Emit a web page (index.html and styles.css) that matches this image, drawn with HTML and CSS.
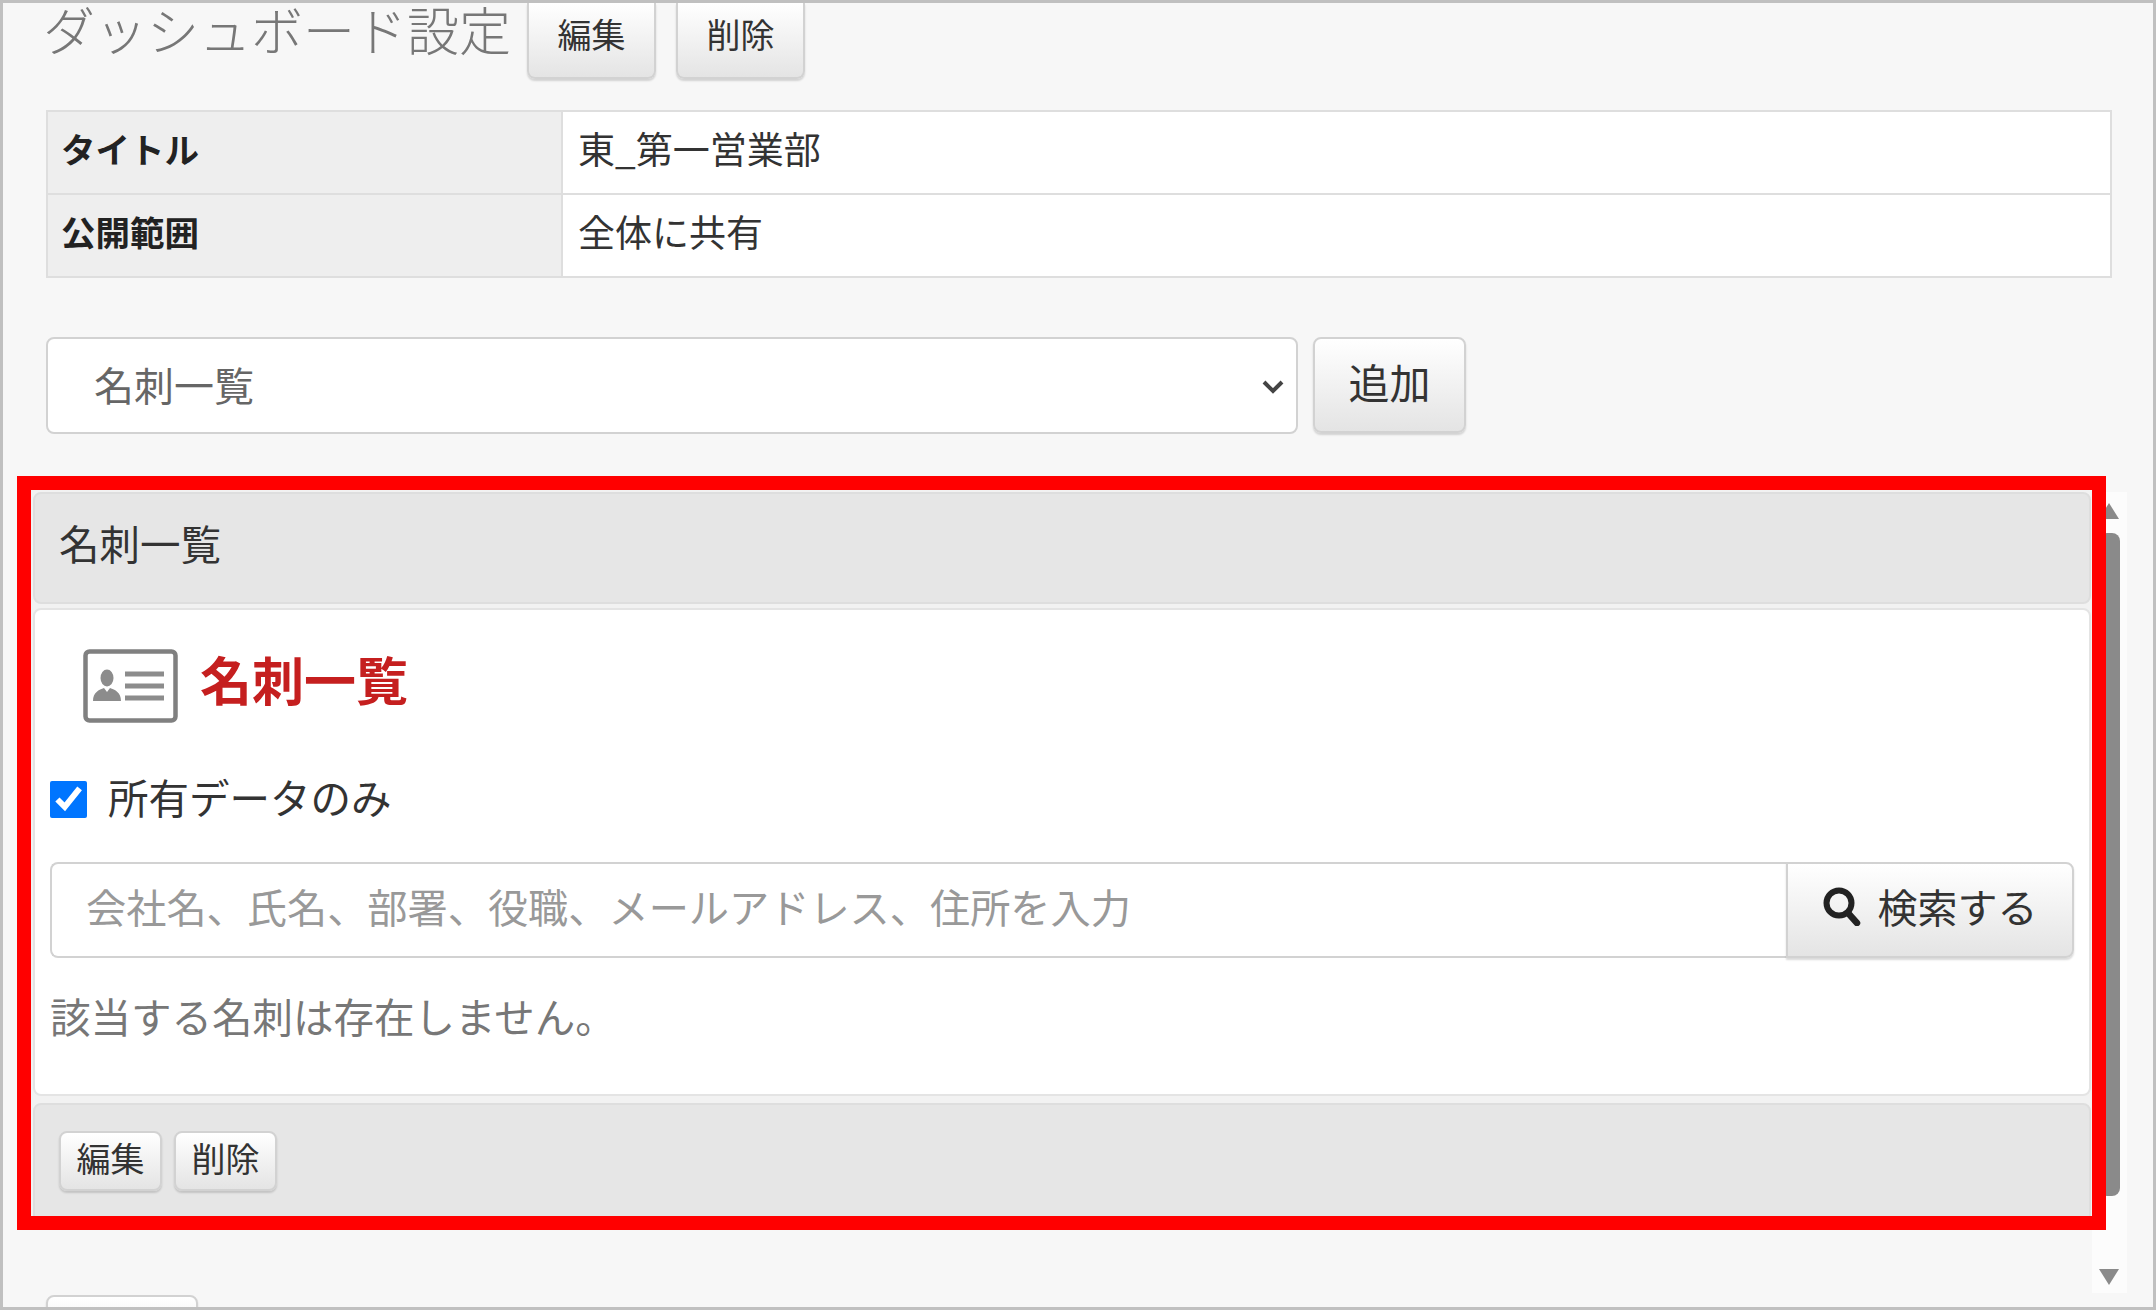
FILE: index.html
```html
<!DOCTYPE html>
<html lang="ja">
<head>
    <meta charset="UTF-8">
    <title>ダッシュボード設定</title>
    <link rel="stylesheet" href="styles.css">
</head>
<body>

    <div class="frame">
        <div class="title-row">
            <h1>ダッシュボード設定</h1>
            <button class="btn btn-top">編集</button>
            <button class="btn btn-top">削除</button>
        </div>

        <table class="info">
            <tr>
                <th>タイトル</th>
                <td>東_第一営業部</td>
            </tr>
            <tr>
                <th>公開範囲</th>
                <td>全体に共有</td>
            </tr>
        </table>

        <div class="add-row">
            <div class="select-wrap">
                <select>
                    <option>名刺一覧</option>
                </select>
                <svg class="chevron" viewBox="0 0 24 16" width="24" height="16">
                    <path d="M3 3l9 9 9-9" fill="none" stroke="#444" stroke-width="4"/>
                </svg>
            </div>
            <button class="btn btn-add">追加</button>
        </div>

        <div class="scrollbar">
            <div class="arrow-up"></div>
            <div class="thumb"></div>
            <div class="arrow-down"></div>
        </div>

        <div class="highlight">
            <div class="panel-head">名刺一覧</div>
            <div class="panel-body">
                <div class="widget-title">
                    <svg class="card-icon" viewBox="0 0 95 74" width="95" height="74">
                        <rect x="2.5" y="2.5" width="90" height="69" rx="4" fill="#fff" stroke="#808080" stroke-width="4.5"/>
                        <ellipse cx="24" cy="29" rx="6.5" ry="8.5" fill="#8c8c8c"/>
                        <path d="M10 52c0-9 6-11 11-13l3 4 3-4c5 2 11 4 11 13z" fill="#8c8c8c"/>
                        <path d="M42 25h39M42 37h39M42 49h39" stroke="#8c8c8c" stroke-width="5"/>
                    </svg>
                    <span class="widget-name">名刺一覧</span>
                </div>
                <label class="own-only">
                    <input type="checkbox" checked>
                    <span>所有データのみ</span>
                </label>
                <div class="search">
                    <input type="text" placeholder="会社名、氏名、部署、役職、メールアドレス、住所を入力">
                    <button class="btn btn-search">
                        <svg viewBox="0 0 38 40" width="38" height="40">
                            <circle cx="16" cy="17" r="12.5" fill="none" stroke="#222" stroke-width="6"/>
                            <path d="M25 27l9 10" stroke="#222" stroke-width="6.5" stroke-linecap="round"/>
                        </svg>
                        検索する
                    </button>
                </div>
                <p class="empty">該当する名刺は存在しません。</p>
            </div>
            <div class="panel-foot">
                <button class="btn btn-small">編集</button>
                <button class="btn btn-small">削除</button>
            </div>
        </div>

        <button class="btn btn-cut"></button>
    </div>

</body>
</html>
```

FILE: styles.css
```css
body {
    margin: 0;
    font-family: "Noto Sans CJK JP", "Noto Sans", sans-serif;
    color: #333;
}
.frame {
    position: relative;
    width: 2156px;
    height: 1310px;
    box-sizing: border-box;
    border: 3px solid #c0c0c0;
    background-color: #f7f7f7;
    overflow: hidden;
}
.btn {
    font-family: inherit;
    color: #333;
    border: 2px solid #d2d2d2;
    border-radius: 8px;
    background: linear-gradient(#ffffff, #e4e4e4);
    box-shadow: 0 2px 2px rgba(0, 0, 0, 0.15);
    padding: 0;
}

.title-row {
    display: flex;
    align-items: flex-end;
    height: 76px;
    margin-bottom: 31px;
    padding-left: 40px;
}
.title-row h1 {
    margin: 0 16px 0 0;
    align-self: flex-start;
    font-size: 52px;
    line-height: 52px;
    font-weight: 300;
    color: #777;
}
.btn-top {
    width: 129px;
    height: 76px;
    margin-right: 20px;
    padding-bottom: 14px;
    font-size: 34px;
    border-top: none;
    border-radius: 0 0 8px 8px;
}

.info {
    width: 2066px;
    margin-left: 43px;
    border-collapse: collapse;
    font-size: 37px;
    line-height: 40px;
}
.info th, .info td {
    height: 71px;
    padding: 0 0 10px 15px;
    border: 2px solid #dedede;
    text-align: left;
}
.info th {
    width: 500px;
    padding-left: 13px;
    font-size: 34.5px;
    background-color: #eeeeee;
    color: #222;
}
.info td {
    background-color: #ffffff;
}

.add-row {
    display: flex;
    gap: 15px;
    margin: 59px 0 42px 43px;
}
.select-wrap {
    position: relative;
    width: 1252px;
    height: 97px;
}
.select-wrap select {
    width: 100%;
    height: 100%;
    padding: 0 0 4px 46px;
    appearance: none;
    font-family: inherit;
    font-size: 40px;
    color: #666;
    background-color: #ffffff;
    border: 2px solid #d2d2d2;
    border-radius: 8px;
}
.chevron {
    position: absolute;
    right: 13px;
    top: 42px;
}
.btn-add {
    width: 153px;
    height: 96px;
    padding-bottom: 8px;
    font-size: 41px;
}

.scrollbar {
    position: absolute;
    left: 2089px;
    top: 489px;
    width: 35px;
    height: 801px;
    background-color: #fcfcfc;
}
.thumb {
    position: absolute;
    left: 7px;
    top: 41px;
    width: 21px;
    height: 663px;
    background-color: #8a8a8a;
    border-radius: 8px;
}
.arrow-up, .arrow-down {
    position: absolute;
    left: 7px;
    width: 0;
    height: 0;
    border-left: 10.5px solid transparent;
    border-right: 10.5px solid transparent;
}
.arrow-up {
    top: 11px;
    border-bottom: 16px solid #8a8a8a;
}
.arrow-down {
    top: 777px;
    border-top: 16px solid #8a8a8a;
}

.highlight {
    position: relative;
    box-sizing: border-box;
    width: 2089px;
    height: 754px;
    margin-left: 14px;
    padding: 2px 1px 0 2px;
    border: 14px solid #ff0000;
    background-color: #f2f2f2;
    overflow: hidden;
}
.panel-head {
    box-sizing: border-box;
    height: 112px;
    margin-bottom: 4px;
    padding-left: 24px;
    font-size: 40.5px;
    line-height: 98px;
    background-color: #e6e6e6;
    border: 2px solid #dedede;
    border-radius: 8px;
}
.panel-body {
    box-sizing: border-box;
    height: 488px;
    margin-bottom: 7px;
    padding: 39px 15px 0 15px;
    background-color: #ffffff;
    border: 2px solid #e4e4e4;
    border-radius: 8px;
}
.widget-title {
    display: flex;
    align-items: center;
    gap: 22px;
    height: 74px;
    margin-left: 33px;
}
.widget-name {
    padding-bottom: 16px;
    font-size: 52px;
    font-weight: bold;
    color: #c51f1f;
}
.own-only {
    display: flex;
    align-items: center;
    gap: 21px;
    height: 37px;
    margin-top: 58px;
    font-size: 40.5px;
}
.own-only span {
    padding-bottom: 6px;
}
.own-only input {
    width: 37px;
    height: 37px;
    margin: 0;
}
.search {
    display: flex;
    height: 96px;
    margin-top: 44px;
}
.search input {
    flex: 1;
    box-sizing: border-box;
    min-width: 0;
    padding: 0 0 10px 34px;
    font-family: inherit;
    font-size: 40.2px;
    color: #333;
    background-color: #ffffff;
    border: 2px solid #d2d2d2;
    border-right: none;
    border-radius: 8px 0 0 8px;
}
.search input::placeholder {
    color: #999;
}
.btn-search {
    display: flex;
    align-items: center;
    justify-content: center;
    gap: 17px;
    width: 288px;
    padding-bottom: 8px;
    font-size: 40px;
    border-radius: 0 8px 8px 0;
}
.empty {
    margin: 29px 0 0 0;
    font-size: 40.5px;
    line-height: 58px;
    color: #777;
}
.panel-foot {
    display: flex;
    gap: 12px;
    box-sizing: border-box;
    height: 120px;
    padding: 26px 0 0 24px;
    background-color: #e6e6e6;
    border: 2px solid #dedede;
    border-radius: 8px;
}
.btn-small {
    width: 103px;
    height: 60px;
    padding-bottom: 8px;
    font-size: 34px;
}
.btn-cut {
    display: block;
    width: 152px;
    height: 60px;
    margin: 65px 0 0 43px;
}
```
